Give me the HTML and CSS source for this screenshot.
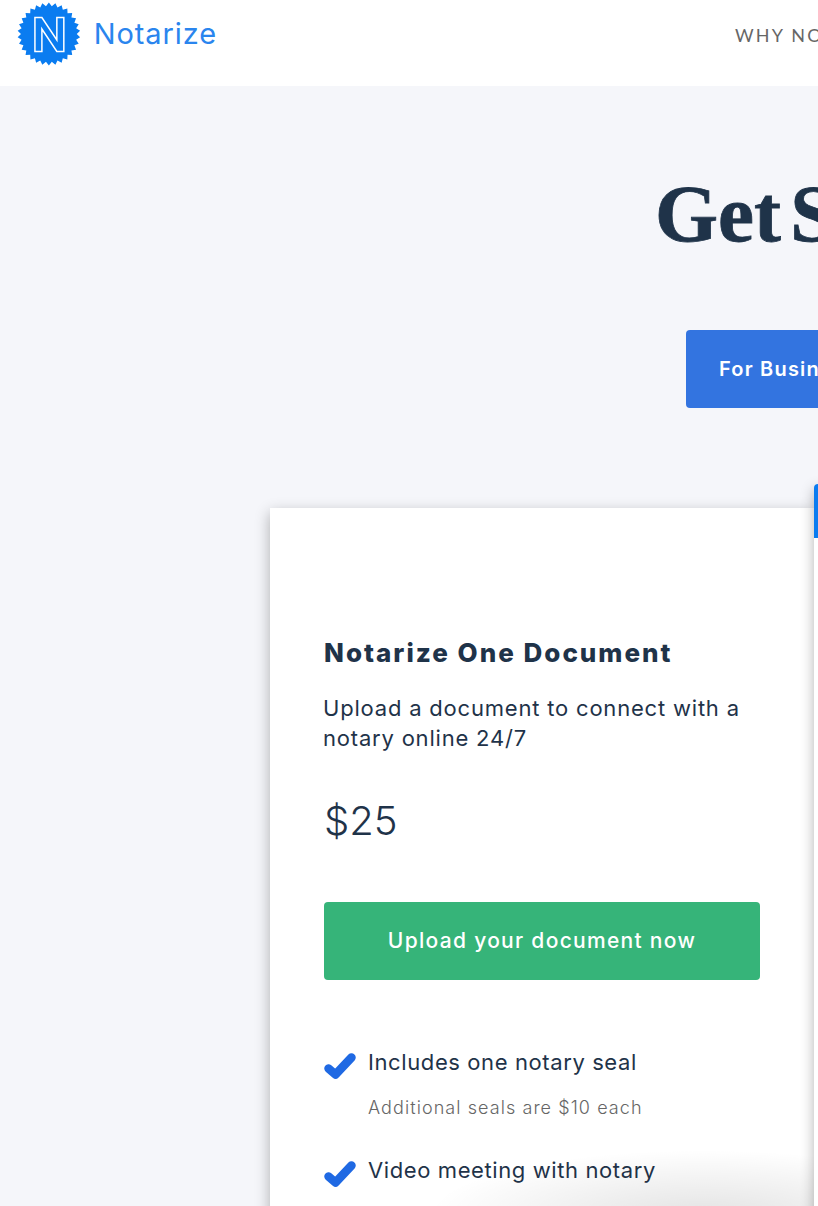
FILE: index.html
```html
<!DOCTYPE html>
<html lang="en">
<head>
    <meta charset="UTF-8">
    <meta name="viewport" content="width=device-width, initial-scale=1.0">
    <title>Notarize Pricing</title>
    <link rel="stylesheet" href="styles.css">
</head>
<body>
    <!-- Header -->
    <header class="site-header">
        <a href="#" class="logo">
            <svg class="logo-seal" viewBox="0 0 64 64" width="64" height="64">
                <polygon fill="#0a7cf0" points="32,.5 34.93,4.15 38.55,1.19 40.65,5.37 44.81,3.22 46,7.75 50.52,6.52 50.73,11.19 55.41,10.92 54.65,15.54 59.28,16.25 57.58,20.61 61.96,22.27 59.39,26.18 63.33,28.71 60,32 63.33,35.29 59.39,37.82 61.96,41.73 57.58,43.39 59.28,47.75 54.65,48.46 55.41,53.08 50.73,52.81 50.52,57.48 46,56.25 44.81,60.78 40.65,58.63 38.55,62.81 34.93,59.85 32,63.5 29.07,59.85 25.45,62.81 23.35,58.63 19.19,60.78 18,56.25 13.48,57.48 13.27,52.81 8.59,53.08 9.35,48.46 4.72,47.75 6.42,43.39 2.04,41.73 4.61,37.82 .67,35.29 4,32 .67,28.71 4.61,26.18 2.04,22.27 6.42,20.61 4.72,16.25 9.35,15.54 8.59,10.92 13.27,11.19 13.48,6.52 18,7.75 19.19,3.22 23.35,5.37 25.45,1.19 29.07,4.15"/>
                <path fill="none" stroke="#fff" stroke-width="1.500" d="M18 15.500h7L40 38V15.500h7v34h-7L25 27v22.500h-7z"/>
            </svg>
            <span class="logo-text">Notarize</span>
        </a>
        <nav class="site-nav">
            <a href="#">WHY NOTARIZE</a>
        </nav>
    </header>

    <!-- Pricing -->
    <main class="pricing">
        <h1 class="pricing-title">Get Started</h1>

        <div class="audience-tabs">
            <a href="#" class="tab tab-active">For Business</a>
        </div>

        <div class="plans">
            <section class="plan">
                <h2 class="plan-name">Notarize One Document</h2>
                <p class="plan-desc">Upload a document to connect with a notary online 24/7</p>
                <div class="plan-price">$25</div>
                <a href="#" class="plan-button">Upload your document now</a>

                <ul class="features">
                    <li class="feature">
                        <svg class="check" viewBox="0 0 32 26" width="32" height="26"><path fill="none" stroke="#1f69e3" stroke-width="8.500" stroke-linecap="round" stroke-linejoin="round" d="M4.500 15.500l7 6L27.500 4.500"/></svg>
                        <div>
                            <div class="feature-label">Includes one notary seal</div>
                            <div class="feature-note">Additional seals are $10 each</div>
                        </div>
                    </li>
                    <li class="feature">
                        <svg class="check" viewBox="0 0 32 26" width="32" height="26"><path fill="none" stroke="#1f69e3" stroke-width="8.500" stroke-linecap="round" stroke-linejoin="round" d="M4.500 15.500l7 6L27.500 4.500"/></svg>
                        <div>
                            <div class="feature-label">Video meeting with notary</div>
                        </div>
                    </li>
                </ul>
            </section>

            <section class="plan plan-featured">
                <div class="plan-banner"></div>
            </section>
        </div>
    </main>

    <div class="bottom-glow"></div>
</body>
</html>
```

FILE: styles.css
```css
* {
    margin: 0;
    padding: 0;
    box-sizing: border-box;
}

html, body {
    width: 818px;
    height: 1206px;
    overflow: hidden;
}

body {
    position: relative;
    font-family: 'Inter', 'Noto Sans', sans-serif;
    background-color: #f5f6fa;
    color: #1f3349;
}

a {
    text-decoration: none;
    color: inherit;
}

/* Header */
.site-header {
    display: flex;
    align-items: center;
    height: 86px;
    padding-left: 17px;
    background-color: #fff;
    white-space: nowrap;
}

.logo {
    display: flex;
    flex-shrink: 0;
    align-items: center;
    gap: 13px;
    width: 200px;
    margin-top: -19px;
}

.logo-seal {
    display: block;
}

.logo-text {
    font-size: 29px;
    letter-spacing: 0.9px;
    color: #2a85ee;
}

.site-nav {
    flex-shrink: 0;
    margin-left: 518px;
    margin-top: -16px;
    font-family: 'Lato', sans-serif;
    font-size: 18px;
    letter-spacing: 2.2px;
    color: #666;
}

/* Pricing */
.pricing {
    width: 1600px;
    padding-top: 86px;
}

.pricing-title {
    padding-left: 655px;
    font-family: 'Liberation Serif', serif;
    font-size: 81px;
    line-height: 84px;
    font-weight: 700;
    word-spacing: -11px;
    -webkit-text-stroke: 0.8px #1f3349;
    color: #1f3349;
    white-space: nowrap;
}

.audience-tabs {
    display: flex;
    padding: 74px 0 0 686px;
}

.tab {
    display: flex;
    align-items: center;
    width: 300px;
    height: 78px;
    padding-left: 33px;
    border-radius: 4px;
    font-size: 20px;
    font-weight: 600;
    letter-spacing: 1.2px;
    color: #fff;
    background-color: #3374e0;
}

.plans {
    display: flex;
    align-items: flex-start;
    padding: 76px 0 0 270px;
}

.plan {
    width: 544px;
    height: 800px;
    margin-top: 24px;
    padding: 129px 54px 0;
    background-color: #fff;
    box-shadow: 0 5px 14px rgba(0, 0, 0, 0.3);
}

.plan-featured {
    position: relative;
    width: 400px;
    margin-top: 0;
    padding: 0;
    border-radius: 4px 4px 0 0;
}

.plan-banner {
    height: 54px;
    border-radius: 4px 4px 0 0;
    background-color: #0a7cf0;
}

.plan-name {
    font-size: 26px;
    line-height: 32px;
    font-weight: 800;
    letter-spacing: 2px;
    color: #1f3349;
}

.plan-desc {
    width: 436px;
    margin-top: 24px;
    margin-left: -1px;
    font-size: 22px;
    line-height: 30px;
    letter-spacing: 0.8px;
    color: #1f3349;
}

.plan-price {
    margin-top: 44px;
    font-size: 40px;
    line-height: 48px;
    font-weight: 300;
    color: #1f3349;
}

.plan-button {
    display: flex;
    justify-content: center;
    align-items: center;
    width: 436px;
    height: 78px;
    margin-top: 57px;
    padding-bottom: 2px;
    border-radius: 4px;
    font-size: 21px;
    font-weight: 500;
    letter-spacing: 1.3px;
    color: #fff;
    background-color: #36b479;
}

.features {
    list-style: none;
    margin-top: 65px;
}

.feature {
    display: flex;
    align-items: flex-start;
    gap: 12px;
    margin-bottom: 32px;
}

.check {
    flex-shrink: 0;
    margin-top: 8px;
}

.feature-label {
    font-size: 22px;
    line-height: 34px;
    letter-spacing: 0.6px;
    color: #1f3349;
}

.feature-note {
    margin-top: 16px;
    font-size: 18px;
    line-height: 26px;
    font-weight: 300;
    letter-spacing: 1.07px;
    color: #666;
}

/* shadow of something sitting just under the fold */
.bottom-glow {
    position: absolute;
    left: 420px;
    top: 1140px;
    width: 394px;
    height: 66px;
    background: radial-gradient(ellipse 70% 100% at 72% 115%, rgba(0, 0, 0, 0.11), rgba(0, 0, 0, 0) 100%);
}
```
